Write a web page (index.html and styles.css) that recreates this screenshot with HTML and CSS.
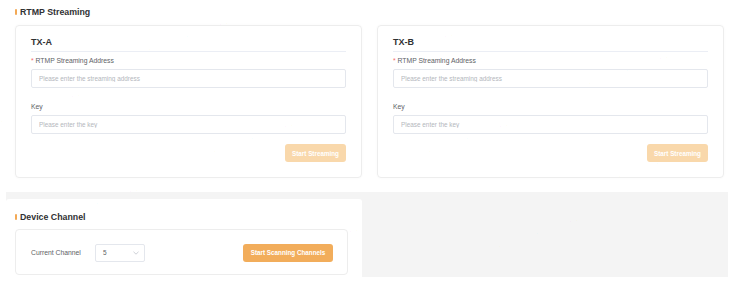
FILE: index.html
```html
<!DOCTYPE html>
<html>

<head lang="en">
    <meta charset="UTF-8">
    <title>Streaming</title>
    <link rel="stylesheet" href="styles.css">
</head>

<body>
<div class="page">
    <!-- RTMP 推流 -->
    <div class="section">
        <h2 class="section-title">RTMP Streaming</h2>
        <div class="tx-list">
            <div class="tx-card">
                <h3 class="tx-name">TX-A</h3>
                <div class="form-item">
                    <label class="form-label"><i class="req">*</i> RTMP Streaming Address</label>
                    <input class="input" type="text" placeholder="Please enter the streaming address">
                </div>
                <div class="form-item">
                    <label class="form-label">Key</label>
                    <input class="input" type="text" placeholder="Please enter the key">
                </div>
                <div class="tx-actions">
                    <button class="btn btn-disabled">Start Streaming</button>
                </div>
            </div>
            <div class="tx-card">
                <h3 class="tx-name">TX-B</h3>
                <div class="form-item">
                    <label class="form-label"><i class="req">*</i> RTMP Streaming Address</label>
                    <input class="input" type="text" placeholder="Please enter the streaming address">
                </div>
                <div class="form-item">
                    <label class="form-label">Key</label>
                    <input class="input" type="text" placeholder="Please enter the key">
                </div>
                <div class="tx-actions">
                    <button class="btn btn-disabled">Start Streaming</button>
                </div>
            </div>
        </div>
    </div>

    <!-- 设备信道 -->
    <div class="lower">
        <div class="channel-card">
            <h2 class="section-title">Device Channel</h2>
            <div class="channel-box">
                <span class="channel-label">Current Channel</span>
                <div class="select">
                    <span>5</span>
                    <svg class="chevron" width="6" height="4" viewBox="0 0 6 4">
                        <path d="M0.5 0.8 L3 3.2 L5.5 0.8" fill="none" stroke="#c0c4cc" stroke-width="0.8"/>
                    </svg>
                </div>
                <button class="btn btn-scan">Start Scanning Channels</button>
            </div>
        </div>
    </div>

    <!-- 水印 -->
    <div class="watermark">
        <span style="left: 150px; top: 48px">A240306255 22&nbsp;&nbsp;2024-12-10</span>
        <span style="left: 2px; top: 120px">A240306255 22&nbsp;&nbsp;2024-12-10</span>
        <span style="left: 215px; top: 150px">A240306255 22&nbsp;&nbsp;2024-12-10</span>
        <span style="left: 375px; top: 60px">A240306255 22&nbsp;&nbsp;2024-12-10</span>
        <span style="left: 590px; top: 82px">A240306255 22&nbsp;&nbsp;2024-12-10</span>
        <span style="left: 430px; top: 150px">A240306255 22&nbsp;&nbsp;2024-12-10</span>
        <span style="left: 620px; top: 175px">A240306255 22&nbsp;&nbsp;2024-12-10</span>
        <span style="left: 60px; top: 215px">A240306255 22&nbsp;&nbsp;2024-12-10</span>
        <span style="left: 500px; top: 245px">A240306255 22&nbsp;&nbsp;2024-12-10</span>
        <span style="left: 280px; top: 255px">A240306255 22&nbsp;&nbsp;2024-12-10</span>
    </div>
</div>
</body>

</html>
```

FILE: styles.css
```css
* {
    padding: 0;
    margin: 0;
    box-sizing: border-box;
}

body {
    background-color: #fff;
    font-family: "Liberation Sans", Arial, sans-serif;
    color: #303133;
}

.page {
    position: relative;
    width: 740px;
    height: 292px;
    overflow: hidden;
}

/* 标题 */
.section-title {
    display: flex;
    align-items: center;
    height: 12px;
    font-size: 8.8px;
    font-weight: bold;
    color: #303133;
}

.section-title::before {
    content: '';
    width: 2px;
    height: 6px;
    margin-right: 3px;
    background-color: #f3a955;
    border-radius: 1px;
}

.section {
    padding: 6px 16px 0 15px;
}

.section .section-title {
    margin-bottom: 7px;
}

.tx-list {
    display: grid;
    grid-template-columns: 1fr 1fr;
    gap: 15px;
}

.tx-card {
    padding: 10px 15px 15px;
    border: 1px solid #ededed;
    border-radius: 4px;
    box-shadow: 0 0 3px rgba(0, 0, 0, .03);
}

.tx-name {
    height: 17px;
    line-height: 14px;
    font-size: 9px;
    font-weight: bold;
    border-bottom: 1px solid #ebeef5;
    margin-top: -1px;
}

.form-item {
    margin-top: 4px;
}

.form-item + .form-item {
    margin-top: 14px;
}

.form-label {
    display: block;
    height: 10px;
    line-height: 10px;
    font-size: 6.8px;
    color: #606266;
    margin-bottom: 3px;
}

.req {
    font-style: normal;
    color: #f56c6c;
}

.input {
    display: block;
    width: 100%;
    height: 19px;
    padding: 0 7px;
    border: 1px solid #e4e7ed;
    border-radius: 2px;
    font-family: "Liberation Sans", Arial, sans-serif;
    font-size: 6.4px;
    color: #606266;
    outline: none;
}

.input::placeholder {
    color: #b4b7bd;
}

.tx-actions {
    display: flex;
    justify-content: flex-end;
    margin-top: 10px;
}

.btn {
    height: 18px;
    padding: 0;
    border: none;
    border-radius: 3px;
    font-family: "Liberation Sans", Arial, sans-serif;
    font-size: 6.3px;
    font-weight: bold;
    color: #fff;
    white-space: nowrap;
}

.btn-disabled {
    width: 61px;
    background-color: #f9d8ab;
}

.btn-scan {
    width: 90px;
    margin-left: auto;
    background-color: #f2ad5b;
}

/* 下方信道 */
.lower {
    display: flex;
    align-items: flex-start;
    margin: 14px 12px 0 6px;
    padding-top: 7px;
    background: linear-gradient(#f4f4f4, #f4f4f4) no-repeat top left / 100% 85px;
}

.channel-card {
    width: 356px;
    padding: 12px 14px 14px 9px;
    background-color: #fff;
    border-radius: 3px 3px 0 0;
}

.channel-card .section-title {
    margin-bottom: 6px;
}

.channel-box {
    display: flex;
    align-items: center;
    height: 46px;
    padding: 1px 14px 0 15px;
    border: 1px solid #ededed;
    border-radius: 4px;
}

.channel-label {
    width: 64px;
    font-size: 6.8px;
    color: #606266;
}

.select {
    display: flex;
    align-items: center;
    justify-content: space-between;
    width: 50px;
    height: 18px;
    padding: 0 5px 0 7px;
    border: 1px solid #e4e7ed;
    border-radius: 2px;
    font-size: 6.5px;
    color: #606266;
}

/* 水印 */
.watermark {
    position: absolute;
    top: 0;
    left: 0;
    width: 100%;
    height: 100%;
    pointer-events: none;
}

.watermark span {
    position: absolute;
    white-space: nowrap;
    font-size: 8px;
    color: rgba(0, 0, 0, .035);
    transform: rotate(-22deg);
    transform-origin: left bottom;
}
```
